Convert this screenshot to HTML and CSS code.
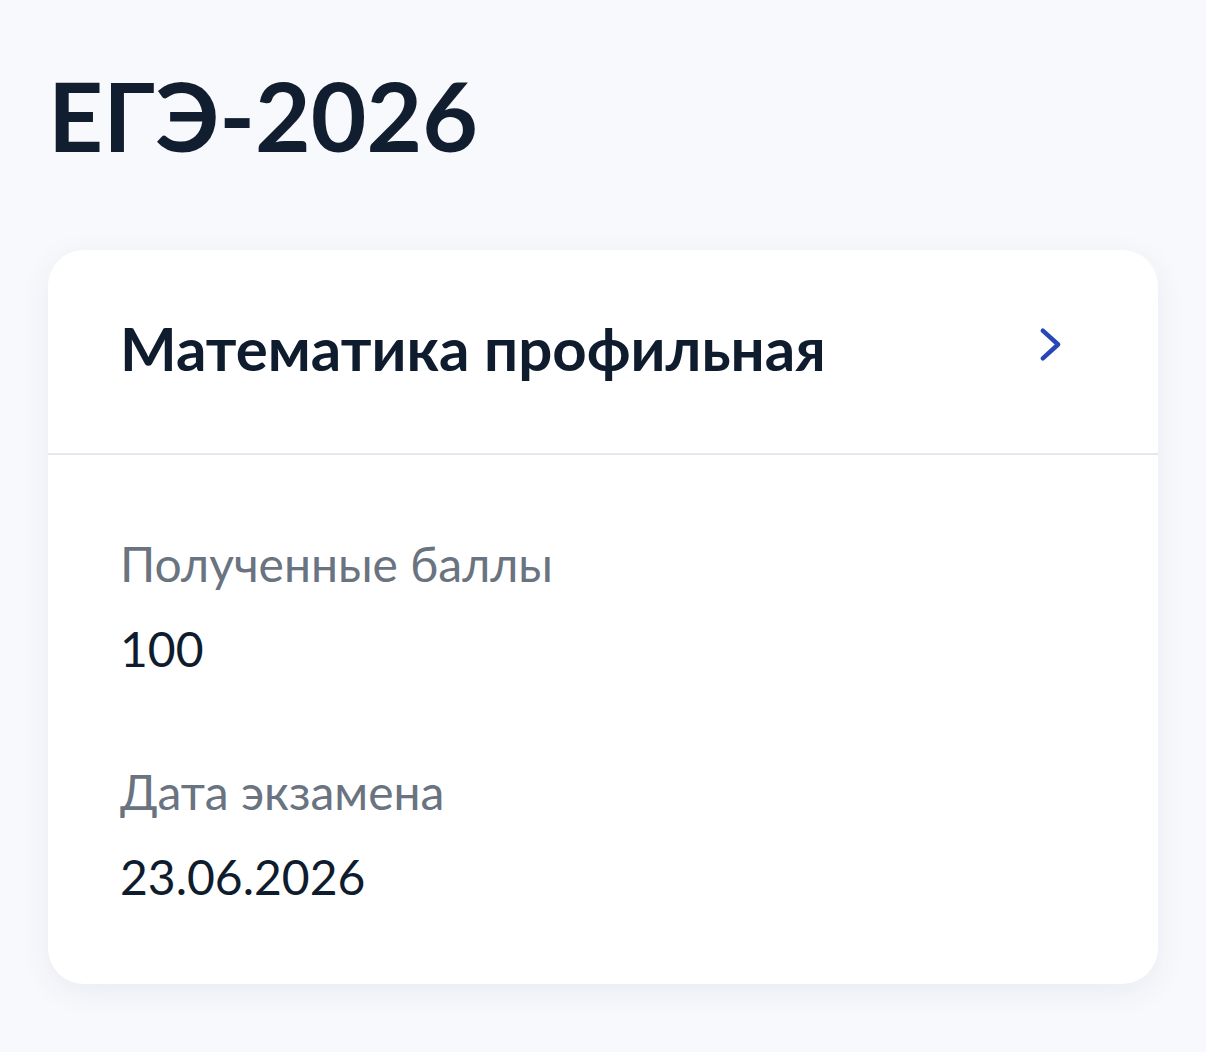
FILE: index.html
```html
<!DOCTYPE html>
<html lang="ru">
<head>
  <meta charset="UTF-8" />
  <title>ЕГЭ-2026</title>
  <meta name="viewport" content="width=device-width, initial-scale=1.0" />
  <link rel="stylesheet" href="styles.css">
</head>
<body>
  <div class="page">
    <h1 class="page-title">ЕГЭ-2026</h1>

    <div class="exam-card">
      <a class="exam-head" href="#">
        <span class="exam-name">Математика профильная</span>
        <span class="exam-arrow">
          <svg width="72" height="72" viewBox="0 0 24 24" fill="none">
            <path d="M9.6 4.9 L14.7 9.5 L9.6 14.1" stroke="#2846b8" stroke-width="1.5" stroke-linecap="round" stroke-linejoin="round"/>
          </svg>
        </span>
      </a>

      <div class="exam-body">
        <div class="field">
          <div class="field-label">Полученные баллы</div>
          <div class="field-value">100</div>
        </div>
        <div class="field">
          <div class="field-label">Дата экзамена</div>
          <div class="field-value">23.06.2026</div>
        </div>
      </div>
    </div>
  </div>
</body>
</html>
```

FILE: styles.css
```css
body {
  margin: 0;
  font-family: 'Lato', 'Noto Sans', sans-serif;
  background-color: #f8f9fc;
  color: #0f1c2e;
}
.page {
  padding: 57px 48px 60px;
}
.page-title {
  margin: 0 0 78px;
  font-size: 96px;
  line-height: 1.2;
  font-weight: 700;
  color: #101e30;
}
.exam-card {
  background: #ffffff;
  border-radius: 36px;
  box-shadow: 0 8px 32px rgba(40, 60, 110, 0.07);
}
.exam-head {
  display: flex;
  align-items: center;
  justify-content: space-between;
  height: 203px;
  padding: 0 72px;
  border-bottom: 2px solid #e6e8f1;
  text-decoration: none;
  color: inherit;
}
.exam-name {
  font-size: 60px;
  line-height: 1.2;
  font-weight: 700;
  color: #0f1c2e;
  margin-bottom: 8px;
}
.exam-arrow {
  display: flex;
  width: 72px;
  height: 72px;
}
.exam-body {
  padding: 80px 72px 78px;
  display: flex;
  flex-direction: column;
  gap: 86px;
}
.field-label {
  font-size: 48px;
  line-height: 1.2;
  color: #6a7380;
  margin-bottom: 27px;
}
.field-value {
  font-size: 48px;
  line-height: 1.2;
  color: #0f1c2e;
}
```
